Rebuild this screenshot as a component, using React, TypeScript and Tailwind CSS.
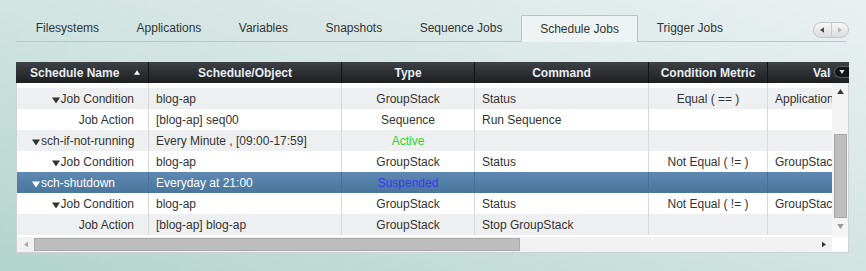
import React from "react";

type Row = {
  name: string;
  root?: boolean;
  arrow?: boolean;
  obj?: string;
  type?: string;
  typeClass?: string;
  cmd?: string;
  metric?: string;
  val?: string;
  selected?: boolean;
};

const tabs = [
  "Filesystems",
  "Applications",
  "Variables",
  "Snapshots",
  "Sequence Jobs",
  "Schedule Jobs",
  "Trigger Jobs",
];

const rows: Row[] = [
  { name: "" },
  { name: "Job Condition", arrow: true, obj: "blog-ap", type: "GroupStack", cmd: "Status", metric: "Equal ( == )", val: "Application" },
  { name: "Job Action", obj: "[blog-ap] seq00", type: "Sequence", cmd: "Run Sequence" },
  { name: "sch-if-not-running", root: true, arrow: true, obj: "Every Minute , [09:00-17:59]", type: "Active", typeClass: "text-[#2fd32f]" },
  { name: "Job Condition", arrow: true, obj: "blog-ap", type: "GroupStack", cmd: "Status", metric: "Not Equal ( != )", val: "GroupStack" },
  { name: "sch-shutdown", root: true, arrow: true, obj: "Everyday at 21:00", type: "Suspended", typeClass: "text-[#3a3aee]", selected: true },
  { name: "Job Condition", arrow: true, obj: "blog-ap", type: "GroupStack", cmd: "Status", metric: "Not Equal ( != )", val: "GroupStack" },
  { name: "Job Action", obj: "[blog-ap] blog-ap", type: "GroupStack", cmd: "Stop GroupStack" },
];

function Tri({ dir, className }: { dir: "up" | "down" | "left" | "right"; className?: string }) {
  const pts = {
    up: "0,6 4,0 8,6",
    down: "0,0 8,0 4,6",
    left: "6,0 6,8 0,4",
    right: "0,0 0,8 6,4",
  }[dir];
  const w = dir === "left" || dir === "right" ? 6 : 8;
  const h = dir === "left" || dir === "right" ? 8 : 6;
  return (
    <svg width={w} height={h} viewBox={`0 0 ${w} ${h}`} className={className}>
      <polygon points={pts} fill="currentColor" />
    </svg>
  );
}

export default function App() {
  return (
    <div
      className="w-[866px] h-[271px] bg-linear-to-bl from-[#eaf0f2] via-[#d1e4e1] to-[#b2d4cc] pl-[16px] pt-[15px] text-[12px] text-[#333]"
      style={{ fontFamily: '"Liberation Sans", Arial, sans-serif' }}
    >
      {/* tabs */}
      <div className="w-[830px] h-[27px] flex items-stretch border-b border-[#bfc6c9] pl-[1px] relative">
        {tabs.map((t) => (
          <div
            key={t}
            className={
              t === "Schedule Jobs"
                ? "px-[18px] flex items-center border border-b-0 border-[#b9c1c5] bg-[#eef3f4] -mb-px h-[27px]"
                : "px-[17.75px] flex items-center border border-transparent"
            }
          >
            {t}
          </div>
        ))}
        <div className="absolute right-[-3px] top-[7px] w-[36px] h-[16px] rounded-full border border-[#c3c6c8] bg-linear-to-b from-[#f7f7f7] to-[#dcdcdc] flex">
          <div className="flex-1 flex items-center justify-center border-r border-[#c8cacc] text-[#4a4a4a]">
            <Tri dir="left" className="w-[4px] h-[6px]" />
          </div>
          <div className="flex-1 flex items-center justify-center text-[#b5b5b5]">
            <Tri dir="right" className="w-[4px] h-[6px]" />
          </div>
        </div>
      </div>

      {/* table */}
      <div className="w-[833px] mt-[20px]">
        <div className="h-[21px] flex bg-linear-to-b from-[#3f4245] to-[#1d1f21] text-[#e6edf3] font-bold">
          <div className="w-[133px] border-r border-[#121416] flex items-center pl-[14px]">
            Schedule Name
            <Tri dir="up" className="ml-[15px] w-[6px] h-[5px] text-white" />
          </div>
          <div className="w-[193px] border-r border-[#121416] flex items-center justify-center">Schedule/Object</div>
          <div className="w-[133px] border-r border-[#121416] flex items-center justify-center">Type</div>
          <div className="w-[174px] border-r border-[#121416] flex items-center justify-center">Command</div>
          <div className="w-[119px] border-r border-[#121416] flex items-center justify-center">Condition Metric</div>
          <div className="flex-1 flex items-center relative">
            <div className="w-[63px] overflow-hidden whitespace-nowrap pl-[45px]">Value</div>
            <div className="absolute right-0 top-[4px] w-[15px] h-[12px] rounded-l-full bg-[#141517] border border-[#5a5d60] border-r-0 flex items-center justify-center text-[#d8dde2]">
              <Tri dir="down" className="w-[6px] h-[4px]" />
            </div>
          </div>
        </div>

        <div className="flex border-l border-r border-b border-[#cdd2d4] bg-white">
          <div className="w-[815px]">
            <div className="h-[154px] overflow-hidden">
              <div className="-mt-[16px]">
                {rows.map((r, i) => {
                  const bg = r.selected
                    ? "bg-linear-to-b from-[#5d89b2] to-[#4a759d] text-white"
                    : i % 2 === 1
                    ? "bg-[#eeeff0]"
                    : "bg-white";
                  const line = r.selected ? "border-[#46709a]" : "border-[#d6d8da]";
                  return (
                    <div key={i} className={`h-[21px] flex ${bg}`}>
                      <div
                        className={`w-[132px] border-r ${line} flex items-center whitespace-nowrap ${
                          r.root ? "pl-[15px]" : "justify-end pr-[14px]"
                        }`}
                      >
                        {r.arrow && <Tri dir="down" className="w-[8px] h-[7px] mr-[1px] mt-[3px]" />}
                        {r.name}
                      </div>
                      <div className={`w-[193px] border-r ${line} flex items-center pl-[7px] whitespace-nowrap`}>{r.obj}</div>
                      <div className={`w-[133px] border-r ${line} flex items-center justify-center ${r.typeClass ?? ""}`}>{r.type}</div>
                      <div className={`w-[174px] border-r ${line} flex items-center pl-[7px]`}>{r.cmd}</div>
                      <div className={`w-[119px] border-r ${line} flex items-center justify-center whitespace-nowrap`}>{r.metric}</div>
                      <div className="w-[64px] flex items-center pl-[7px] overflow-hidden whitespace-nowrap">{r.val}</div>
                    </div>
                  );
                })}
              </div>
            </div>
            <div className="h-[15px] bg-[#f1f1f1] flex items-center">
              <div className="w-[17px] flex justify-center text-[#a9a9a9]">
                <Tri dir="left" className="w-[4px] h-[7px]" />
              </div>
              <div className="w-[486px] h-[13px] bg-[#bdbdbd] border border-[#a9a9a9]" />
              <div className="flex-1" />
              <div className="w-[17px] flex justify-center text-[#333]">
                <Tri dir="right" className="w-[4px] h-[7px]" />
              </div>
            </div>
          </div>
          <div className="w-[16px] flex flex-col items-center bg-white">
            <div className="h-[51px] w-full bg-[#f4f4f4] flex justify-center pt-[6px] text-[#3a3a3a]">
              <Tri dir="up" className="w-[7px] h-[5px]" />
            </div>
            <div className="w-full bg-[#f4f4f4] flex justify-center">
              <div className="w-[13px] h-[84px] bg-[#bdbdbd] border border-[#a9a9a9]" />
            </div>
            <div className="h-[19px] w-full bg-[#f4f4f4] flex justify-center pt-[6px] text-[#9a9a9a]">
              <Tri dir="down" className="w-[7px] h-[5px]" />
            </div>
          </div>
        </div>
      </div>
    </div>
  );
}
